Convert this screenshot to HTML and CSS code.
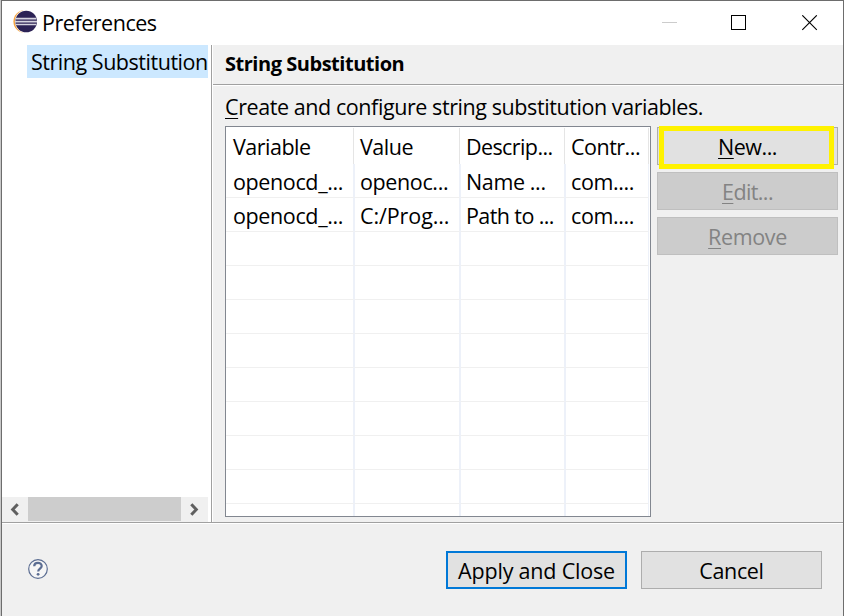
FILE: index.html
```html
<!DOCTYPE html>
<html lang="en">
<head>
<meta charset="utf-8">
<title>Preferences</title>
<link rel="stylesheet" href="styles.css">
</head>
<body>
<div class="window">
  <header class="titlebar">
    <svg class="logo" width="24" height="24" viewBox="0 0 24 24">
      <circle cx="11.7" cy="11.5" r="11.3" fill="#f7a540"/>
      <circle cx="13.8" cy="11.5" r="11.9" fill="#fff"/>
      <circle cx="13.2" cy="11.5" r="10.8" fill="#2c2255"/>
      <path d="M3 8.6h20.3M2 11.6h22M3 14.5h20.3" stroke="#d5d3df" stroke-width="1.6"/>
    </svg>
    <h1 class="title"><span class="t-title">Preferences</span></h1>
    <svg class="controls" width="156" height="16" viewBox="0 0 156 16">
      <path d="M0 7.5h15" stroke="#ccc"/>
      <rect x="69.5" y=".5" width="14" height="14" fill="none" stroke="#000"/>
      <path d="M140.3.3l14.5 14.5M154.8.3l-14.5 14.5" stroke="#000" stroke-width="1.1"/>
    </svg>
  </header>
  <main class="main">
    <nav class="sidebar">
      <div class="tree-item"><span class="t-tree">String Substitution</span></div>
      <div class="scrollbar">
        <svg width="26" height="25" viewBox="0 0 26 25"><path d="M15.7 7.2l-5 5.3 5 5.3" fill="none" stroke="#606060" stroke-width="3"/></svg>
        <div class="thumb"></div>
        <svg width="27" height="25" viewBox="0 0 27 25"><path d="M10.3 7.2l5 5.3-5 5.3" fill="none" stroke="#606060" stroke-width="3"/></svg>
      </div>
    </nav>
    <section class="page">
      <h2 class="heading"><span class="t-heading">String Substitution</span></h2>
      <p class="intro"><span class="t-intro"><u>C</u>reate and configure string substitution variables.</span></p>
      <div class="content">
        <div class="table">
          <div class="row head"><span><b class="tighter">Variable</b></span><span><b class="tighter">Value</b></span><span><b class="tightest">Descrip...</b></span><span><b class="tighter">Contr...</b></span></div>
          <div class="row first"><span><b>openocd_...</b></span><span><b>openoc...</b></span><span><b>Name ...</b></span><span><b>com....</b></span></div>
          <div class="row"><span><b>openocd_...</b></span><span><b class="loose">C:/Prog...</b></span><span><b class="tightest">Path to ...</b></span><span><b>com....</b></span></div>
          <div class="row"><span></span><span></span><span></span><span></span></div>
          <div class="row"><span></span><span></span><span></span><span></span></div>
          <div class="row"><span></span><span></span><span></span><span></span></div>
          <div class="row"><span></span><span></span><span></span><span></span></div>
          <div class="row"><span></span><span></span><span></span><span></span></div>
          <div class="row"><span></span><span></span><span></span><span></span></div>
          <div class="row"><span></span><span></span><span></span><span></span></div>
          <div class="row"><span></span><span></span><span></span><span></span></div>
          <div class="row last"><span></span><span></span><span></span><span></span></div>
        </div>
        <div class="actions">
          <button class="button marked"><span class="tighter"><u>N</u>ew...</span></button>
          <button class="button" disabled><span class="tightest"><u>E</u>dit...</span></button>
          <button class="button" disabled><span><u>R</u>emove</span></button>
        </div>
      </div>
    </section>
  </main>
  <footer class="footer">
    <svg class="help" width="20" height="20" viewBox="0 0 20 20">
      <circle cx="10" cy="10" r="9.3" fill="#f6f6f6" stroke="#5b6d92" stroke-width="1.2"/>
      <path d="M6.2 7.2C6.3 2.8 13.7 2.9 13.7 7c0 2.6-3.5 2.8-3.5 5.6" fill="none" stroke="#5b6d92" stroke-width="2.2"/>
      <circle cx="10.1" cy="15.3" r="1.4" fill="#5b6d92"/>
    </svg>
    <button class="button primary"><span class="apply">Apply and Close</span></button>
    <button class="button"><span>Cancel</span></button>
  </footer>
</div>
</body>
</html>
```
FILE: styles.css
```css
*, ::after { box-sizing: border-box; }
body {
  margin: 0;
  background: #c8c8c8;
  font: 21.5px/30px "Open Sans", "Noto Sans", sans-serif;
  color: #000;
}
span, b { white-space: nowrap; }
b, .button span { letter-spacing: -.37px; }
b { font-weight: 400; }
u { text-decoration-thickness: 1px; text-underline-offset: 3px; }
.t-title, .t-tree, .t-heading { letter-spacing: -.47px; }
.t-intro { letter-spacing: -.42px; }
b.tighter, .button .tighter { letter-spacing: -.5px; }
b.tightest, .button .tightest { letter-spacing: -.6px; }
b.loose { letter-spacing: -.1px; }
.button .apply { letter-spacing: -.2px; }
.window {
  display: flex;
  flex-direction: column;
  width: 843px;
  height: 616px;
  margin-left: 1px;
  border: 1px solid #6d6d6d;
  border-bottom: 0;
  background: #f0f0f0;
}
.titlebar {
  display: flex;
  align-items: flex-start;
  height: 44px;
  padding: 9px 25px 0 11px;
  background: #fff;
}
.title { flex: 1; margin: -2px 0 0 5px; font-size: inherit; font-weight: 400; }
.controls { margin-top: 5px; }
.main { display: flex; height: 477px; }
.sidebar {
  display: flex;
  flex-direction: column;
  justify-content: space-between;
  width: 210px;
  padding-right: 3px;
  border-right: 1px solid #a0a0a0;
  background: #fff;
}
.tree-item { height: 33px; margin-left: 25px; padding: 2px 0 0 4px; background: #cce8ff; }
.scrollbar { display: flex; height: 25px; background: #f0f0f0; }
.thumb { width: 153px; height: 24px; background: #cdcdcd; }
.page { flex: 1; border-left: 1px solid #fff; }
.heading {
  height: 40px;
  margin: 0;
  padding: 4px 0 0 12px;
  border-bottom: 1px solid #a0a0a0;
  box-shadow: 0 1px #fff;
  font-size: 20px;
  font-weight: 700;
}
.intro { height: 41px; margin: 0; padding: 7px 0 0 12px; }
.content { display: flex; gap: 6px; padding-left: 12px; }
.table { width: 426px; height: 391px; border: 1px solid #828790; background: #fff; overflow: hidden; }
.row { display: grid; grid-template-columns: 129px 106px 105px 83px; height: 34px; }
.row span { border-right: 2px solid #edf1f9; border-bottom: 1px solid #f0f0f0; padding: 3px 0 0 6px; }
.row span:first-child { padding-left: 7px; }
.row span + span { padding-left: 5px; }
.row span:last-child { border-right-width: 1px; }
.row.head { height: 37px; padding-top: 1px; }
.row.head span { margin-right: 1px; border-right: 1px solid #e5e5e5; border-bottom: 0; padding-top: 4px; }
.row.head span:last-child { margin-right: 0; }
.row.last { height: 12px; }
.row.last span { border-bottom: 0; }
.actions { display: flex; flex-direction: column; gap: 7px; padding-top: 1px; }
.button {
  position: relative;
  width: 181px;
  height: 38px;
  padding: 2px 0 0;
  border: 1px solid #adadad;
  background: #e1e1e1;
  color: #000;
  font: inherit;
}
.button:disabled { border-color: #bfbfbf; background: #ccc; color: #838383; }
.button.primary { border: 2px solid #0078d7; }
.marked::after {
  content: "";
  position: absolute;
  left: 1px;
  top: -2px;
  width: 175px;
  height: 43px;
  border: 5px solid #fff200;
}
.footer {
  display: flex;
  align-items: center;
  gap: 14px;
  flex: 1;
  padding: 0 21px 0 26px;
  border-top: 1px solid #a0a0a0;
  box-shadow: inset 0 1px #fff;
}
.help { margin: -2px auto 0 0; }
```
